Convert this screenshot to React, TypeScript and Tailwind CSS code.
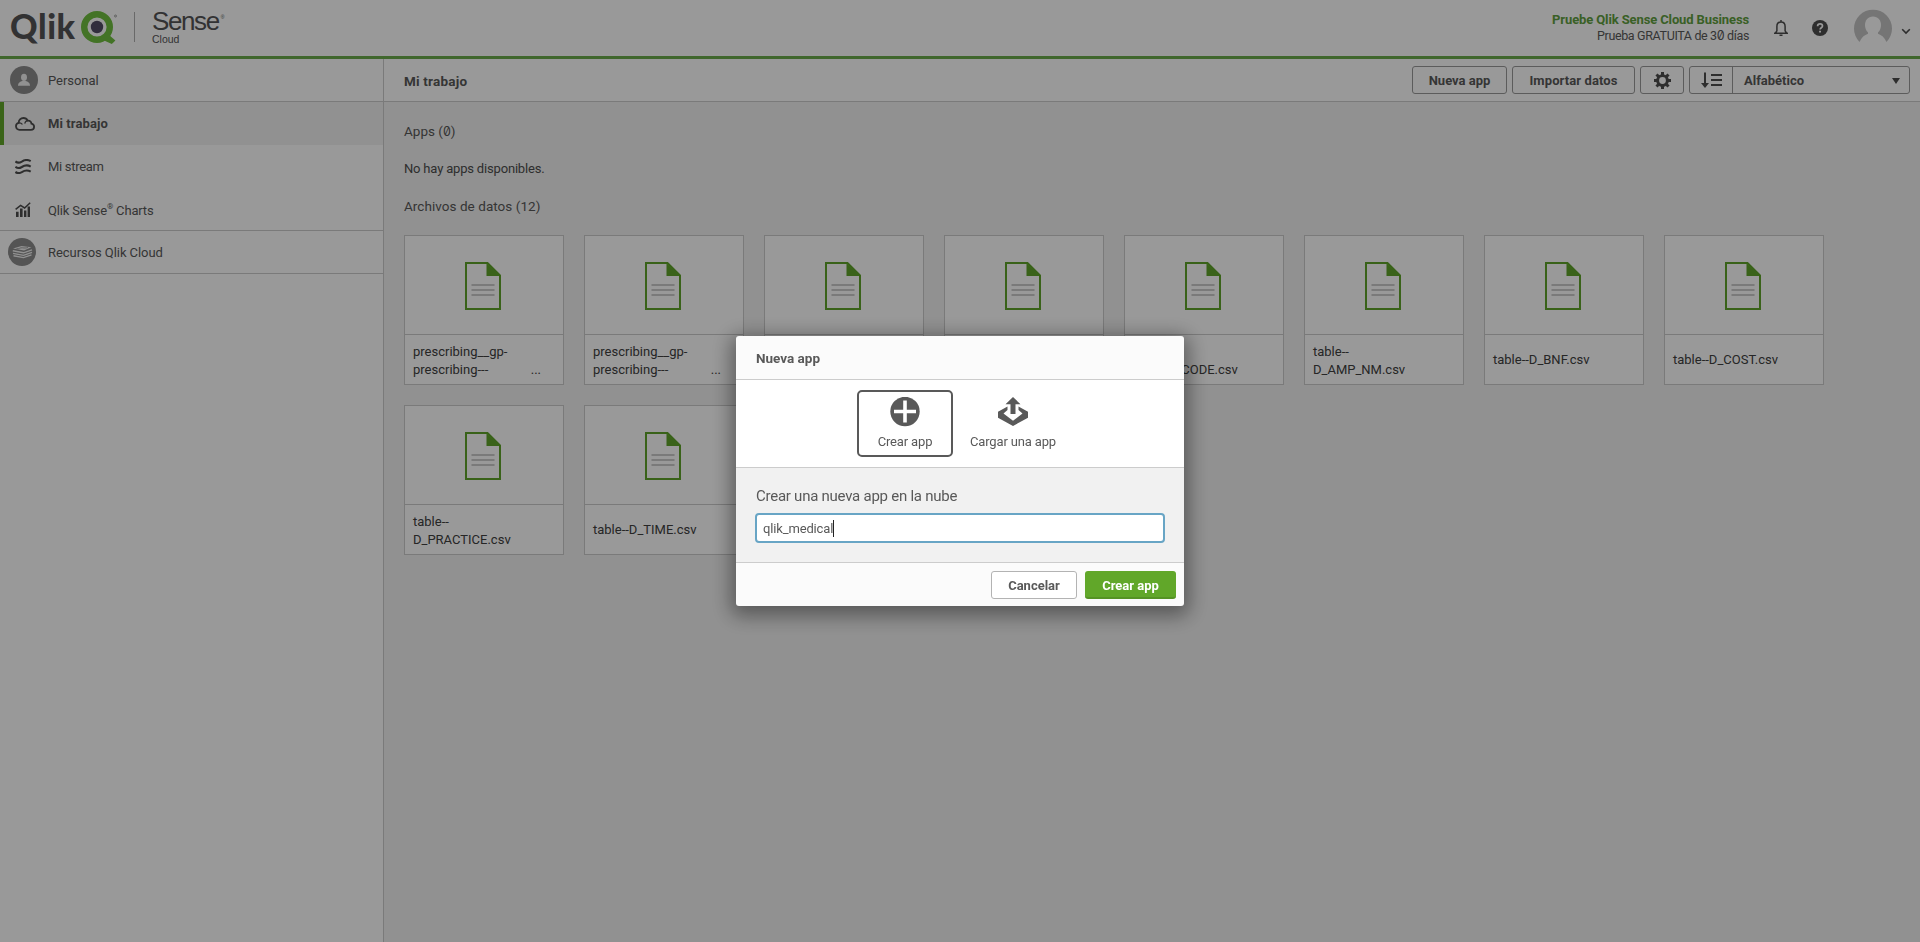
import React from "react";

const FILES: string[][] = [
  ["prescribing__gp-", "prescribing---", "..."],
  ["prescribing__gp-", "prescribing---", "..."],
  ["prescribing__gp-", "prescribing---", "..."],
  ["table--", "D_ADQ.csv"],
  ["table--", "D_AMP_CODE.csv"],
  ["table--", "D_AMP_NM.csv"],
  ["table--D_BNF.csv"],
  ["table--D_COST.csv"],
  ["table--", "D_PRACTICE.csv"],
  ["table--D_TIME.csv"],
  ["table--D_VMP.csv"],
  ["table--D_VTM.csv"],
];

function Zero() {
  return <span className="font-['Inter',sans-serif] text-[12.5px] slashed-zero">0</span>;
}

function QlikMark() {
  return (
    <svg width="36" height="34" viewBox="0 0 36 34" className="shrink-0">
      <path d="M27.500 23.500l6.900 6.100-3.600 3.300-8.800-4z" fill="#70c040" />
      <circle cx="16" cy="16" r="12.800" fill="#fff" stroke="#70c040" strokeWidth="6.400" />
      <circle cx="16" cy="16" r="6.200" fill="#524b66" />
      <circle cx="34.500" cy="5" r="1" fill="none" stroke="#8a8a8a" strokeWidth="0.800" />
    </svg>
  );
}

function PersonIcon() {
  return (
    <svg width="28" height="28" viewBox="0 0 28 28">
      <circle cx="14" cy="14" r="14" fill="#8c8c8c" />
      <ellipse cx="14" cy="11.300" rx="3" ry="3.600" fill="#f2f2f2" />
      <path d="M8 19.800c0-3 2.200-4.100 4.300-4.700h3.400c2.100.6 4.300 1.700 4.300 4.700z" fill="#f2f2f2" />
    </svg>
  );
}

function CloudIcon() {
  return (
    <svg width="20" height="14" viewBox="0 0 20 14" fill="none" stroke="#4d4d4d" strokeLinecap="round">
      <path d="M4.600 12.800a3.500 3.500 0 0 1-.9-6.900C3.600 3.200 5.700 1 8.400 1c2 0 3.500 1 4.300 2.600 2.200-.3 3.700 1.200 3.700 3 1.700.4 2.700 1.600 2.700 3.100 0 1.800-1.400 3.100-3.200 3.100z" strokeWidth="1.800" />
      <path d="M3.700 5.900c1.300-.3 2.600.1 3.400 1.200M12.700 3.600c-1.500.2-2.600 1.100-2.800 2.600" strokeWidth="1.200" />
    </svg>
  );
}

function StreamIcon() {
  return (
    <svg width="18" height="15" viewBox="0 0 18 15" fill="none" stroke="#4d4d4d" strokeWidth="2.100">
      <path d="M.4 2.400c1.800 1.500 4.200 1.500 6.400.2C9.300 1 12.500.2 15.700 2.200" />
      <path d="M.4 7.800c1.800 1.500 4.200 1.500 6.400.2 2.500-1.600 5.700-2.400 8.900-.4" />
      <path d="M.4 12.900c1.800 1.500 4.200 1.500 6.400.2 2.500-1.600 5.700-2.400 8.900-.4" />
    </svg>
  );
}

function ChartIcon() {
  return (
    <svg width="16" height="15" viewBox="0 0 16 15">
      <path d="M1 9.800h2.600V15H1zM5 6.500h2.600V15H5zM9 8.500h2.400V15H9zM12.600 4.500H15V15h-2.400z" fill="#4d4d4d" />
      <path d="M.6 7.400L5.600 3.400l4 2.600L15.200.7" fill="none" stroke="#4d4d4d" strokeWidth="1.500" />
    </svg>
  );
}

function ResourcesIcon() {
  return (
    <svg width="28" height="28" viewBox="0 0 28 28" fill="none">
      <circle cx="14" cy="14" r="14" fill="#8c8c8c" />
      <path d="M5 10.500L13.500 8l10 1.200L16 12.500z" fill="#f2f2f2" />
      <g stroke="#f2f2f2" strokeWidth="1.400">
        <path d="M4.800 12.800l10.700 2 8.500-3" />
        <path d="M5 15.400l10.500 2 8.500-3" />
        <path d="M5.500 17.800l10 1.800 8-2.700" />
      </g>
      <path d="M8.500 10.600c2.500.8 3.500-1.200 6-.8 2 .3 3.500.3 5.500-.3" stroke="#8c8c8c" strokeWidth="0.800" />
    </svg>
  );
}

function FileIcon() {
  return (
    <svg width="36" height="48" viewBox="0 0 36 48">
      <path d="M1 1h21.500L35 13.500V47H1z" fill="none" stroke="#5fa32a" strokeWidth="2" />
      <path d="M21.500 1L35 14H21.500z" fill="#5fa32a" />
      <path d="M6.500 23h23M6.500 28h23M6.500 33h23" stroke="#cccccc" strokeWidth="2" />
    </svg>
  );
}

function GearIcon() {
  const teeth = [0, 45, 90, 135, 180, 225, 270, 315];
  return (
    <svg width="17" height="17" viewBox="0 0 16 16">
      <circle cx="8" cy="8" r="4.600" fill="none" stroke="#4d4d4d" strokeWidth="2.800" />
      {teeth.map((a) => (
        <rect key={a} x="6.600" y="0" width="2.800" height="3" fill="#4d4d4d" transform={`rotate(${a} 8 8)`} />
      ))}
    </svg>
  );
}

function SideRow({
  icon,
  children,
  className = "",
}: {
  icon: React.ReactNode;
  children: React.ReactNode;
  className?: string;
}) {
  return (
    <div className={`flex items-center text-[13px] text-[#595959] ${className}`}>
      {icon}
      <div>{children}</div>
    </div>
  );
}

function FileCard({ lines }: { lines: string[] }) {
  return (
    <div className="flex h-[150px] w-[160px] flex-col border border-[#cccccc] bg-white">
      <div className="flex h-[99px] items-center justify-center border-b border-[#cccccc] pt-[2px] pr-[2px]">
        <FileIcon />
      </div>
      <div
        className={`flex flex-1 items-center pl-2 text-[13px] leading-[18px] text-[#404040] ${lines[1] ? "pt-[3px]" : ""}`}
      >
        <div className="w-[128px]">
          <div>{lines[0]}</div>
          {lines[1] && (
            <div className="flex justify-between">
              <span>{lines[1]}</span>
              <span>{lines[2]}</span>
            </div>
          )}
        </div>
      </div>
    </div>
  );
}

const toolButton =
  "flex h-7 items-center justify-center rounded-[3px] border border-[#999999] text-[13px] font-bold text-[#595959]";

export default function App() {
  return (
    <div className="flex h-[942px] w-[1920px] flex-col overflow-hidden bg-white font-['Roboto',sans-serif] text-[#595959]">
      <header className="flex h-[59px] shrink-0 border-b-[3px] border-[#6cac4c] pl-[10px]">
        <div className="flex w-[71px] pt-1 font-['Lato',sans-serif] text-[34px] leading-[43px] font-black tracking-[0.6px] text-[#545456]">
          Qlik
        </div>
        <div className="pt-[11px]">
          <QlikMark />
        </div>
        <div className="mt-3 ml-[17px] h-[30px] w-px bg-[#b0b0b0]" />
        <div className="ml-[17px] flex flex-col pt-2 font-['Liberation_Sans',sans-serif] text-[#545456]">
          <div className="flex text-[26px] leading-[26px] tracking-[-1.4px]">
            Sense<span className="ml-0.5 text-[5px] leading-[18px]">®</span>
          </div>
          <div className="mt-px text-[10.500px] leading-[9px]">Cloud</div>
        </div>
        <div className="flex-1" />
        <div className="flex flex-col items-end pt-3 text-[13px] leading-4">
          <div className="font-bold tracking-[-0.12px] text-[#5fa040]">Pruebe Qlik Sense Cloud Business</div>
          <div className="text-[12.500px] tracking-[-0.36px]">
            Prueba GRATUITA de 3<Zero /> días
          </div>
        </div>
        <svg width="16" height="18" viewBox="0 0 16 18" fill="none" stroke="#4d4d4d" strokeWidth="1.500" className="mt-[19px] ml-6">
          <path d="M1 14.200h14M2.500 14l1.400-2.200V7.500c0-2.700 1.700-4.500 4.100-4.500s4.100 1.800 4.100 4.500v4.300l1.400 2.200M8 3V1M6.500 16.200h3" />
        </svg>
        <svg width="16" height="16" viewBox="0 0 16 16" className="mt-5 ml-[23px]">
          <circle cx="8" cy="8" r="8" fill="#4d4d4d" />
          <path d="M5.600 6.200c0-1.400 1-2.300 2.500-2.300s2.400.9 2.400 2.100c0 1.700-2.400 1.700-2.400 3.500" fill="none" stroke="#fff" strokeWidth="1.700" />
          <path d="M7.100 10.800h1.900v1.800H7.100z" fill="#fff" />
        </svg>
        <svg width="38" height="38" viewBox="0 0 38 38" className="mt-[9px] ml-[26px]">
          <path d="M5.500 33A19 19 0 1 1 32.500 33C30.500 28.500 27.500 26 24 24.800L19 27l-5-2.200C10.500 26 7.500 28.500 5.500 33z" fill="#c4c4c4" />
          <path d="M19 7.500c5 0 8 3.700 8 8.500 0 5.500-3.600 9.500-8 9.500s-8-4-8-9.500c0-4.800 3-8.500 8-8.500z" fill="#fff" />
          <path d="M14 23h10v6H14z" fill="#fff" />
        </svg>
        <svg width="10" height="7" viewBox="0 0 10 7" className="mt-[28px] mr-[9px] ml-[9px]">
          <path d="M1.200 1.200L5 5l3.800-3.800" fill="none" stroke="#4d4d4d" strokeWidth="1.600" />
        </svg>
      </header>

      <div className="flex min-h-0 flex-1">
        <aside className="flex w-96 shrink-0 flex-col border-r border-[#cccccc]">
          <SideRow icon={<div className="w-[38px]"><PersonIcon /></div>} className="h-[43px] border-b border-[#cccccc] pl-[10px] tracking-[-0.05px]">
            <div className="pt-0.5">Personal</div>
          </SideRow>
          <SideRow icon={<div className="w-[33px]"><CloudIcon /></div>} className="h-[43px] border-l-4 border-[#61a729] bg-[#f2f2f2] pl-[11px] font-bold tracking-[0.1px]">
            Mi trabajo
          </SideRow>
          <SideRow icon={<div className="w-[33px]"><StreamIcon /></div>} className="h-[43px] pl-[15px] tracking-[-0.3px]">
            Mi stream
          </SideRow>
          <SideRow icon={<div className="w-[33px]"><ChartIcon /></div>} className="h-[43px] border-b border-[#cccccc] pl-[15px] tracking-[-0.16px]">
            <div className="pt-[3px] whitespace-pre">
              Qlik Sense<span className="relative -top-[6px] text-[8px] leading-none">®</span> Charts
            </div>
          </SideRow>
          <SideRow icon={<div className="w-10"><ResourcesIcon /></div>} className="h-[43px] border-b border-[#cccccc] pl-2 tracking-[-0.06px]">
            <div className="pt-0.5">Recursos Qlik Cloud</div>
          </SideRow>
        </aside>

        <main className="flex flex-1 flex-col bg-[#f2f2f2]">
          <div className="flex h-[43px] items-center gap-[5px] border-b border-[#cccccc] bg-white pr-[10px] pl-5">
            <div className="flex-1 pt-0.5 text-[13.500px] font-bold tracking-[0.2px]">Mi trabajo</div>
            <div className={`${toolButton} w-[95px] pt-px`}>Nueva app</div>
            <div className={`${toolButton} w-[123px] pt-px tracking-[0.1px]`}>Importar datos</div>
            <div className={`${toolButton} w-11`}>
              <GearIcon />
            </div>
            <div className="flex h-7 w-[221px] rounded-[3px] border border-[#999999]">
              <div className="flex w-[43px] items-center justify-center border-r border-[#999999]">
                <svg width="21" height="16" viewBox="0 0 21 16" fill="none" stroke="#4d4d4d" strokeWidth="2">
                  <path d="M4 .5v12M10 3h11M10 8h11M10 13h11" />
                  <path d="M0 11h8l-4 5z" fill="#4d4d4d" stroke="none" />
                </svg>
              </div>
              <div className="flex flex-1 items-center justify-between pt-px pr-[9px] pl-[11px] text-[13px] font-bold">
                Alfabético
                <svg width="8" height="6" viewBox="0 0 8 6">
                  <path d="M0 0h8L4 6z" fill="#4d4d4d" />
                </svg>
              </div>
            </div>
          </div>

          <div className="flex flex-col px-5 pt-[19px]">
            <div className="h-[39px] text-[13.500px] leading-[20px]">
              Apps (<Zero />)
            </div>
            <div className="h-[36px] text-[13px] leading-[18px] tracking-[-0.18px] text-[#4d4d4d]">No hay apps disponibles.</div>
            <div className="h-[39px] text-[13.500px] leading-[20px] tracking-[0.05px]">Archivos de datos (12)</div>
            <div className="grid grid-cols-[repeat(8,160px)] gap-5">
              {FILES.map((lines, i) => (
                <FileCard key={i} lines={lines} />
              ))}
            </div>
          </div>
        </main>
      </div>

      <div className="fixed inset-0 flex items-center justify-center bg-black/40">
        <div className="flex h-[270px] w-[448px] flex-col overflow-hidden rounded-[3px] bg-[#fbfbfb] shadow-[0_5px_20px_5px_rgba(0,0,0,0.4)]">
          <div className="flex h-11 items-center border-b border-[#cccccc] pt-0.5 pl-5 text-[13.500px] font-bold">Nueva app</div>
          <div className="flex h-[88px] border-b border-[#cccccc] bg-white pt-[10px] pl-[121px]">
            <div className="flex h-[67px] w-24 flex-col items-center rounded-[5px] border-2 border-[#595959] pt-[5px] text-[13px] tracking-[-0.15px]">
              <svg width="30" height="30" viewBox="0 0 30 30">
                <circle cx="15" cy="14.500" r="14.700" fill="#595959" />
                <path d="M4 14.500h22M15 3.500v22" stroke="#fff" strokeWidth="3.600" />
              </svg>
              <div className="mt-[7px] leading-4">Crear app</div>
            </div>
            <div className="ml-3 flex h-[67px] w-24 flex-col items-center pt-[7px] text-[13px] tracking-[-0.15px]">
              <svg width="30" height="30" viewBox="0 0 30 30" fill="#595959">
                <path d="M15 0l7.500 7.200h-5V17h-5V7.200h-5z" />
                <path d="M9.500 9.400v3.600L5.500 16.500 15 23.800l9.500-7.300-4-3.500V9.400L30 14.800v6L15 29 0 20.800v-6z" />
              </svg>
              <div className="mt-[7px] leading-4">Cargar una app</div>
            </div>
          </div>
          <div className="flex h-[95px] flex-col border-b border-[#cccccc] bg-[#f1f1f1] pt-[18px] pl-[19px]">
            <div className="pl-px text-[15px] leading-5 tracking-[-0.25px]">Crear una nueva app en la nube</div>
            <div className="mt-[7px] flex h-[30px] w-[410px] items-center rounded-[4px] border-2 border-[#68a5c5] bg-white pl-[6px] text-[13px]">
              <div className="pt-0.5 tracking-[-0.15px]">qlik_medical</div>
              <div className="h-[17px] w-px bg-[#222222]" />
            </div>
          </div>
          <div className="flex flex-1 justify-end gap-2 pt-2 pr-2">
            <div className="flex h-7 w-[86px] items-center justify-center rounded-[3px] border border-[#b3b3b3] bg-white pt-0.5 text-[13px] font-bold">
              Cancelar
            </div>
            <div className="flex h-7 w-[91px] items-center justify-center rounded-[3px] border-b-2 border-[#559324] bg-[#61a729] pt-[3px] text-[13px] font-bold text-white">
              Crear app
            </div>
          </div>
        </div>
      </div>
    </div>
  );
}
